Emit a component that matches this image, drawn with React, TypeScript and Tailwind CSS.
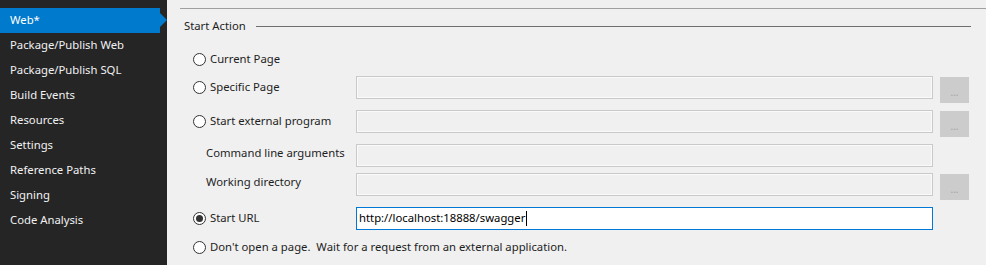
import React from "react";

const font = { fontFamily: '"Noto Sans", "Open Sans", sans-serif' };

function Radio({ checked = false }: { checked?: boolean }) {
  return (
    <span className="flex h-[13px] w-[13px] shrink-0 items-center justify-center rounded-full border border-[#333333] bg-white">
      {checked && <span className="h-[7px] w-[7px] rounded-full bg-[#333333]" />}
    </span>
  );
}

function Input({ active = false, value }: { active?: boolean; value?: string }) {
  if (active) {
    return (
      <div className="flex h-[23px] w-[577px] items-center border border-[#0078d7] bg-white pl-[2px] text-[11.3px] text-black">
        <span>{value}</span>
        <span className="ml-[1px] h-[15px] w-px bg-black" />
      </div>
    );
  }
  return (
    <div className="h-[23px] w-[577px] border border-[#c9c9c9] bg-[#f0f0f0] shadow-[inset_0_0_0_1px_#fafafa]" />
  );
}

function Browse() {
  return (
    <div className="ml-[7px] mt-[1px] flex h-[26px] w-[29px] shrink-0 items-center justify-center bg-[#cccccc] pt-[4px] text-[10px] leading-none text-[#a3a3a3]">
      ...
    </div>
  );
}

function Row({
  mt,
  label,
  radio,
  checked,
  indent,
  input,
  active,
  value,
  browse,
}: {
  mt: string;
  label: string;
  radio?: boolean;
  checked?: boolean;
  indent?: boolean;
  input?: boolean;
  active?: boolean;
  value?: string;
  browse?: boolean;
}) {
  return (
    <div className={`flex h-[23px] items-start pl-[26px] ${mt}`}>
      <div
        className={`flex h-[23px] w-[163px] shrink-0 items-center whitespace-pre text-[11.3px] text-[#1e1e1e] ${
          indent ? "pb-[4px] pl-[13px]" : ""
        }`}
      >
        {radio && <Radio checked={checked} />}
        <span className={radio ? "ml-[4px]" : ""}>{label}</span>
      </div>
      {input && <Input active={active} value={value} />}
      {browse && <Browse />}
    </div>
  );
}

const navItems = [
  "Web*",
  "Package/Publish Web",
  "Package/Publish SQL",
  "Build Events",
  "Resources",
  "Settings",
  "Reference Paths",
  "Signing",
  "Code Analysis",
];

export default function App() {
  return (
    <div className="flex h-[265px] w-[986px] overflow-hidden bg-[#f0f0f0]" style={font}>
      <div className="w-[167px] shrink-0 bg-[#252526] pt-[8px]">
        {navItems.map((item, i) => (
          <div
            key={item}
            className={`relative flex h-[25px] items-center pl-[10px] text-[11.3px] text-[#f1f1f1] ${
              i === 0 ? "mr-[7px] bg-[#007acc] text-white" : ""
            }`}
          >
            {item}
            {i === 0 && (
              <span className="absolute right-[-7px] top-[5px] h-0 w-0 border-y-[7.5px] border-l-[7px] border-y-transparent border-l-[#007acc]" />
            )}
          </div>
        ))}
      </div>
      <div className="flex flex-1 flex-col">
        <div className="ml-[13px] mt-[8px] border-t border-[#a0a0a0]" />
        <div className="mt-[7px] flex h-[20px] items-center pl-[17px] pr-[15px]">
          <span className="text-[11.3px] text-[#1e1e1e]">Start Action</span>
          <div className="ml-[10px] h-px flex-1 bg-[#6e6e6e]" />
        </div>
        <Row mt="mt-[12px]" label="Current Page" radio />
        <Row mt="mt-[5px]" label="Specific Page" radio input browse />
        <Row mt="mt-[11px]" label="Start external program" radio input browse />
        <Row mt="mt-[11px]" label="Command line arguments" indent input />
        <Row mt="mt-[6px]" label="Working directory" indent input browse />
        <Row mt="mt-[11px]" label="Start URL" radio checked input active value="http://localhost:18888/swagger" />
        <div className="mt-[6px] flex h-[23px] items-center pl-[26px] text-[11.3px] text-[#1e1e1e]">
          <Radio />
          <span className="ml-[4px] whitespace-pre">Don't open a page.  Wait for a request from an external application.</span>
        </div>
      </div>
    </div>
  );
}
